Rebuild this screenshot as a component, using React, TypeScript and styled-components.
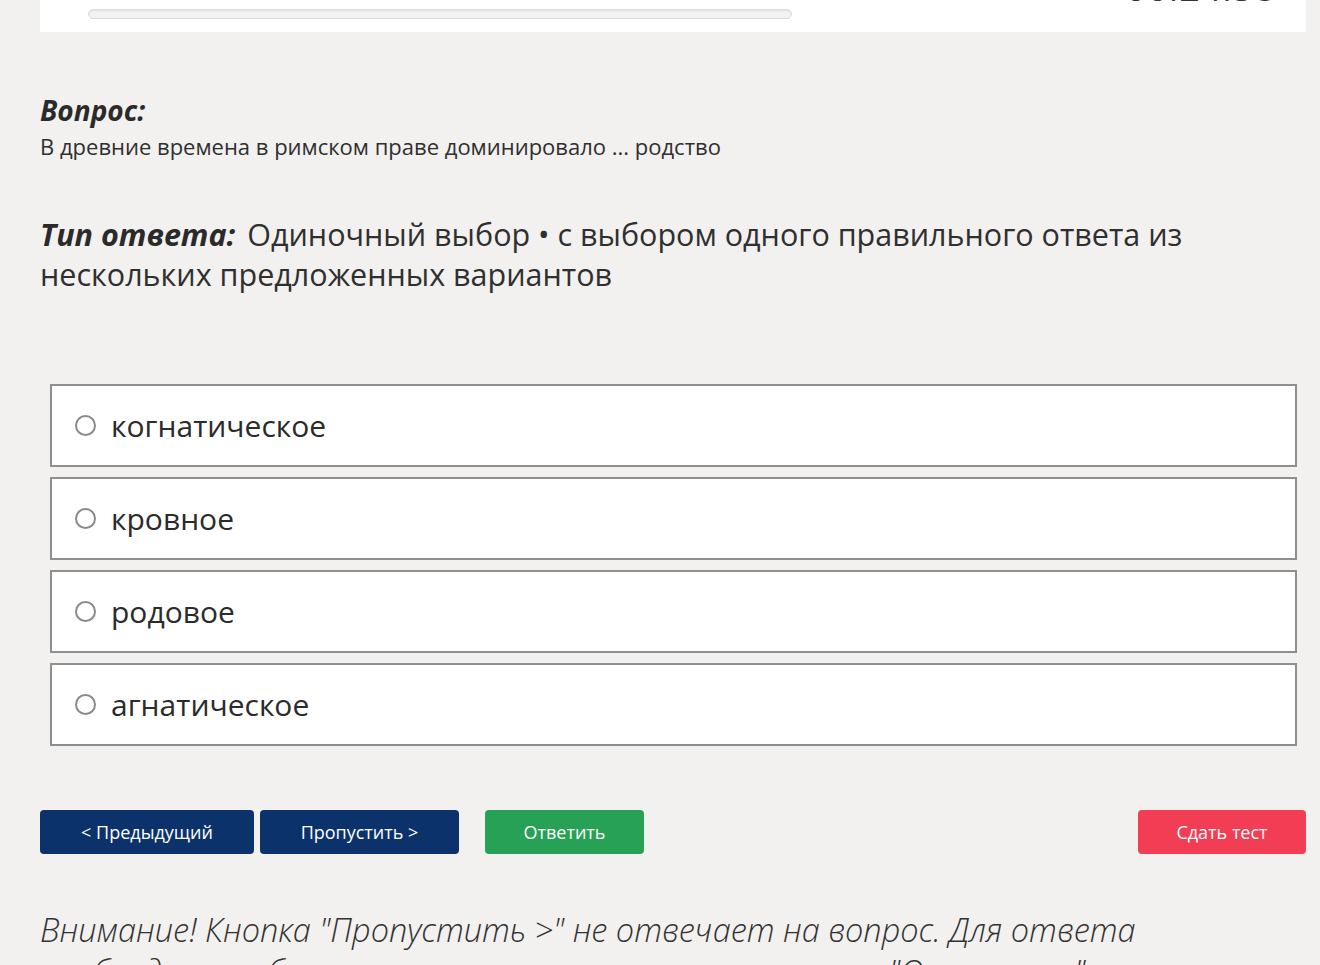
import React from "react";
import styled, { createGlobalStyle } from "styled-components";

const Global = createGlobalStyle`
  html, body { margin: 0; padding: 0; background: #f2f1ef; }
  body { font-family: "Open Sans", "Noto Sans", sans-serif; color: #2b2b2b; overflow: hidden; }
`;

const Page = styled.div`
  width: 1320px;
  height: 965px;
  overflow: hidden;
  box-sizing: border-box;
  padding: 0 14px 0 40px;
`;

const TopPanel = styled.div`
  margin-top: -60px;
  height: 92px;
  background: #ffffff;
  display: flex;
  align-items: flex-end;
  justify-content: space-between;
  padding: 0 30px 13px 48px;
  box-sizing: border-box;
`;

const ProgressCol = styled.div`
  display: flex;
  flex-direction: column;
  gap: 8px;
`;

const ProgressLabel = styled.div`
  font-size: 16px;
  color: #666;
  height: 22px;
`;

const ProgressTrack = styled.div`
  width: 702px;
  height: 8px;
  border-radius: 5px;
  background: #f3f3f3;
  border: 1px solid #dcdcdc;
  box-shadow: inset 0 1px 2px rgba(0,0,0,0.08);
`;

const Timer = styled.div`
  font-size: 36px;
  line-height: 36px;
  color: #333;
  margin-bottom: 13px;
  letter-spacing: 1px;
`;

const QuestionBlock = styled.section`
  margin-top: 60px;
`;

const Heading = styled.div`
  font-size: 28px;
  font-weight: 700;
  font-style: italic;
  line-height: 36px;
  color: #2a2a2a;
`;

const QuestionText = styled.div`
  margin-top: 4px;
  font-size: 22px;
  line-height: 28px;
  color: #2f2f2f;
`;

const AnswerType = styled.div`
  margin-top: 54px;
  font-size: 30.5px;
  line-height: 40px;
  color: #2f2f2f;
  width: 1200px;
`;

const TypeLabel = styled.b`
  font-weight: 700;
  font-style: italic;
  color: #2a2a2a;
  margin-right: 4px;
`;

const Options = styled.div`
  margin: 90px 9px 0 10px;
  display: flex;
  flex-direction: column;
  gap: 10px;
`;

const Option = styled.label`
  height: 83px;
  box-sizing: border-box;
  background: #fff;
  border: 2px solid #8f8f8f;
  display: flex;
  align-items: center;
  padding-left: 23px;
  gap: 15px;
  cursor: pointer;
`;

const Radio = styled.span`
  width: 21px;
  height: 21px;
  box-sizing: border-box;
  border-radius: 50%;
  border: 2px solid #8a8a8a;
  background: #fff;
  flex: none;
`;

const OptionText = styled.span`
  font-size: 30px;
  color: #2b2b2b;
  line-height: 40px;
`;

const ButtonRow = styled.div`
  margin-top: 64px;
  display: flex;
  align-items: center;
`;

const Btn = styled.button<{ $bg: string; $w: number; $ml?: number }>`
  height: 44px;
  width: ${(p) => p.$w}px;
  margin-left: ${(p) => p.$ml ?? 0}px;
  background: ${(p) => p.$bg};
  color: #fff;
  border: none;
  border-radius: 4px;
  font-family: "Open Sans", "Noto Sans", sans-serif;
  font-size: 18px;
  padding: 0;
  cursor: pointer;
`;

const Spacer = styled.div`
  flex: 1;
`;

const Warning = styled.div`
  margin-top: 55px;
  font-size: 32.5px;
  line-height: 42px;
  font-style: italic;
  font-weight: 300;
  color: #333;
  width: 1180px;
`;

export default function App() {
  return (
    <>
      <Global />
      <Page>
        <TopPanel>
          <ProgressCol>
            <ProgressLabel />
            <ProgressTrack />
          </ProgressCol>
          <Timer>00:24:58</Timer>
        </TopPanel>
        <QuestionBlock>
          <Heading>Вопрос:</Heading>
          <QuestionText>В древние времена в римском праве доминировало ... родство</QuestionText>
          <AnswerType>
            <TypeLabel>Тип ответа:</TypeLabel> Одиночный выбор • с выбором одного правильного ответа из нескольких предложенных вариантов
          </AnswerType>
        </QuestionBlock>
        <Options>
          {["когнатическое", "кровное", "родовое", "агнатическое"].map((t) => (
            <Option key={t}>
              <Radio />
              <OptionText>{t}</OptionText>
            </Option>
          ))}
        </Options>
        <ButtonRow>
          <Btn $bg="#0b326b" $w={214}>&lt; Предыдущий</Btn>
          <Btn $bg="#0b326b" $w={199} $ml={6}>Пропустить &gt;</Btn>
          <Btn $bg="#27a155" $w={159} $ml={26}>Ответить</Btn>
          <Spacer />
          <Btn $bg="#f33d55" $w={168}>Сдать тест</Btn>
        </ButtonRow>
        <Warning>
          Внимание! Кнопка "Пропустить &gt;" не отвечает на вопрос. Для ответа необходимо выбрать пункт из списка и нажать кнопку "Ответить".
        </Warning>
      </Page>
    </>
  );
}
